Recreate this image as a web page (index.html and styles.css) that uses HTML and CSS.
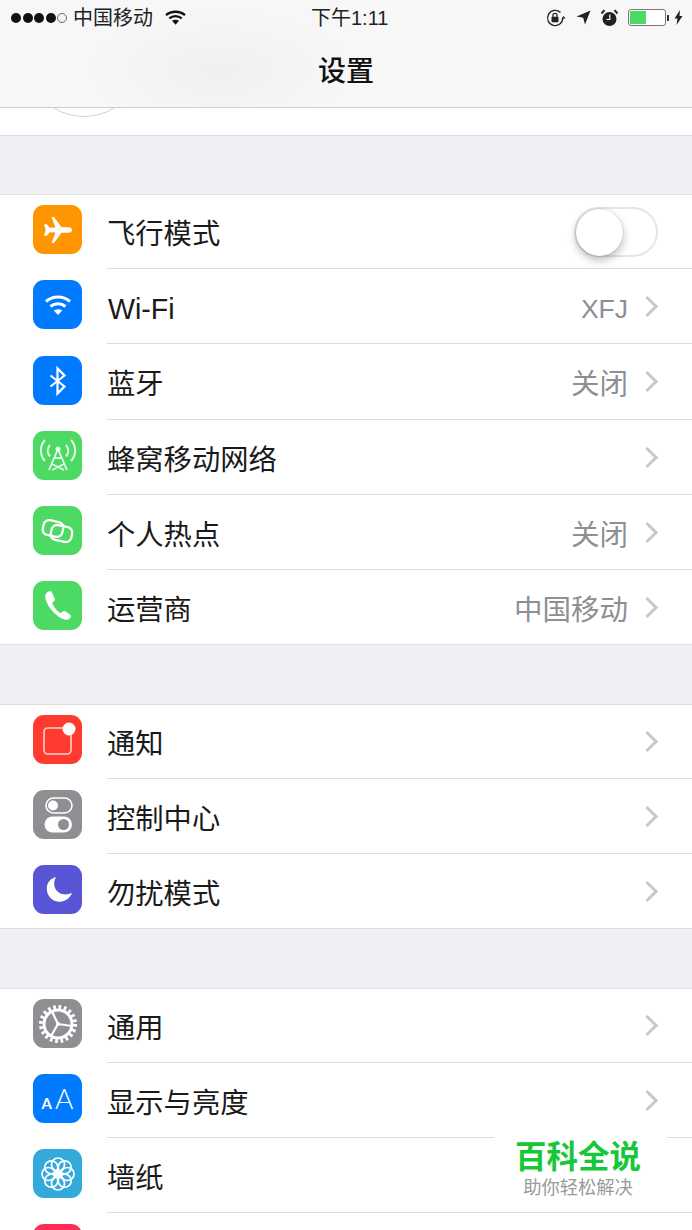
FILE: index.html
```html
<!DOCTYPE html>
<html lang="zh-CN">
<head>
<meta charset="utf-8">
<title>设置</title>
<link rel="stylesheet" href="styles.css">
</head>
<body>
<div class="screen">
  <header class="nav">
    <div class="status">
      <div class="status-left">
        <span class="dots"><i></i><i></i><i></i><i></i><i class="empty"></i></span>
        <span class="carrier">中国移动</span>
        <svg class="s-wifi" width="21" height="15" viewBox="0 0 21 15"><path d="M1 5.200C6.300.6 14.700.6 20 5.200M4.300 8.400c3.500-3 8.900-3 12.400 0" fill="none" stroke="#111" stroke-width="2.300"/><path d="M7 10.800c2-1.400 5-1.400 7 0l-3.500 3.900z" fill="#111"/></svg>
      </div>
      <div class="time">下午1:11</div>
      <div class="status-right">
        <svg width="20" height="18" viewBox="0 0 20 18"><path d="M16.800 9A7.600 7.600 0 1 1 14.500 3.500" fill="none" stroke="#222" stroke-width="1.300"/><path d="M15.500 9.500h4l-2-2.500z" fill="#222"/><rect x="5.500" y="7.700" width="7" height="5.600" rx=".8" fill="#222"/><path d="M7 8V6.300a2 2 0 0 1 4 0V8" fill="none" stroke="#222" stroke-width="1.300"/></svg>
        <svg class="s-arrow" width="15" height="15" viewBox="0 0 15 15"><path d="M14.500.5 9 14.500 7.200 7.800.5 6.500z" fill="#222"/></svg>
        <svg class="s-alarm" width="17" height="18" viewBox="0 0 17 18"><circle cx="8.500" cy="10" r="7" fill="#222"/><path d="M8.800 5.500v5H5.500" fill="none" stroke="#fff" stroke-width="1.200"/><path d="M.5 4.500 3.500 1.200M16.500 4.500l-3-3.300" stroke="#222" stroke-width="2"/></svg>
        <div class="battery"><div class="battery-body"><div class="battery-fill"></div></div><div class="battery-tip"></div></div>
        <svg class="s-bolt" width="9" height="15" viewBox="0 0 9 15"><path d="M6 0 .5 8.500h3L2.500 15 8.500 6h-3z" fill="#222"/></svg>
      </div>
    </div>
    <h1 class="title">设置</h1>
  </header>

  <div class="profile-tail"><div class="avatar"></div></div>
  <div class="gap first-gap"></div>

  <section class="group">
    <div class="row first">
      <span class="icon orange"><svg width="36" height="36" viewBox="0 0 36 36"><path d="M4 12.500 6.500 12l3.300 3.800 5.700-.2L11.500 5h2.500l7.500 10.300 7-.1c2 0 3.500 1.100 3.500 2.800s-1.500 2.800-3.500 2.800l-7-.1L14 31h-2.500l4-10.600-5.700-.2-3.300 3.800-2.500-.5 1.700-5.500z" fill="#fff"/></svg></span>
      <div class="row-main"><span class="label">飞行模式</span><div class="toggle"><div class="knob"></div></div></div>
    </div>
    <div class="row">
      <span class="icon blue"><svg width="36" height="36" viewBox="0 0 36 36"><path d="M6 14.500c7-6 17-6 24 0M10.500 19.500c4.500-3.800 10.500-3.800 15 0" fill="none" stroke="#fff" stroke-width="3"/><path d="M13.800 23.500c2.500-1.800 5.900-1.800 8.400 0L18 28z" fill="#fff"/></svg></span>
      <div class="row-main"><span class="label latin-label">Wi-Fi</span><span class="value latin">XFJ</span><span class="chev"></span></div>
    </div>
    <div class="row tall">
      <span class="icon blue"><svg width="36" height="36" viewBox="0 0 36 36"><path d="M10.500 12.500 24.500 23.500 17.500 30.500V5.500L24.500 12.500 10.500 23.500" fill="none" stroke="#fff" stroke-width="2.200"/></svg></span>
      <div class="row-main"><span class="label">蓝牙</span><span class="value">关闭</span><span class="chev"></span></div>
    </div>
    <div class="row">
      <span class="icon green"><svg width="48" height="48" viewBox="0 0 48 48"><g fill="none" stroke="#e6f8e6"><path d="M11 8c-5.500 6-5.500 15 0 21M37 8c5.500 6 5.500 15 0 21M16 13c-3 3.500-3 8 0 11.500M32 13c3 3.500 3 8 0 11.500" stroke-width="2"/><path d="M24 17 15 38M24 17l9 21M20 26h8M18 32l12 6M30 32 18 38" stroke-width="1.800"/></g><circle cx="24" cy="17" r="2.500" fill="#e6f8e6"/></svg></span>
      <div class="row-main"><span class="label">蜂窝移动网络</span><span class="chev"></span></div>
    </div>
    <div class="row">
      <span class="icon green"><svg width="48" height="48" viewBox="0 0 48 48"><g fill="none" stroke="#fff" stroke-width="2.300"><rect x="9" y="14" width="20" height="15" rx="5.500" transform="rotate(12 19 21.500)"/><rect x="17" y="19" width="21" height="15" rx="5.500" transform="rotate(12 27.500 26.500)"/></g></svg></span>
      <div class="row-main"><span class="label">个人热点</span><span class="value">关闭</span><span class="chev"></span></div>
    </div>
    <div class="row last">
      <span class="icon green"><svg width="36" height="36" viewBox="0 0 36 36"><path d="M8.500 3.500c-2 .8-3.800 3-3.300 6 1.200 7.500 9.500 18.800 19 22 2.500.8 5 0 6.300-2 .6-1 .5-2-.3-2.700l-5-3.500c-1-.6-2-.5-2.800.3l-1.500 1.700c-3.500-1.500-7-6-8.800-10.500l2-1.500c.8-.7 1-1.500.7-2.500l-3-6.500c-.5-1-2-1.200-3.300-.8z" fill="#fff"/></svg></span>
      <div class="row-main"><span class="label">运营商</span><span class="value">中国移动</span><span class="chev"></span></div>
    </div>
  </section>

  <div class="gap"></div>

  <section class="group">
    <div class="row first">
      <span class="icon red"><svg width="48" height="48" viewBox="0 0 48 48"><path d="M29 12H14a4 4 0 0 0-4 4v18a4 4 0 0 0 4 4h19a4 4 0 0 0 4-4V19" fill="none" stroke="#ffd0cc" stroke-width="1.600"/><circle cx="35" cy="13" r="6.500" fill="#fff"/></svg></span>
      <div class="row-main"><span class="label">通知</span><span class="chev"></span></div>
    </div>
    <div class="row">
      <span class="icon gray"><svg width="48" height="48" viewBox="0 0 48 48"><rect x="12" y="7" width="26" height="15" rx="7.500" fill="none" stroke="#fff" stroke-width="1.600"/><circle cx="19" cy="14.500" r="5" fill="#fff"/><rect x="10.500" y="25.500" width="27.500" height="16" rx="8" fill="#fff"/><circle cx="29.500" cy="33.500" r="5.500" fill="#8e8e93"/></svg></span>
      <div class="row-main"><span class="label">控制中心</span><span class="chev"></span></div>
    </div>
    <div class="row last">
      <span class="icon indigo"><svg width="48" height="48" viewBox="0 0 48 48"><path d="M22 11C15 13 12 18 13 25c1 7 8 12 15 10.500 4-.8 8-3.500 10-8.500-7 3-14.500 1-17-5-1.500-3.500-1-7.500 1-11z" fill="#fff"/></svg></span>
      <div class="row-main"><span class="label">勿扰模式</span><span class="chev"></span></div>
    </div>
  </section>

  <div class="gap"></div>

  <section class="group">
    <div class="row first">
      <span class="icon gray"><svg width="48" height="48" viewBox="0 0 48 48"><circle cx="24" cy="24" r="14" fill="none" stroke="#fff" stroke-width="3"/><circle cx="24" cy="24" r="17" fill="none" stroke="#fff" stroke-width="4" stroke-dasharray="2.700 2.640"/><path d="M24 24 18 11.500M24 24l14 2M24 24l-7 12" stroke="#fff" stroke-width="2.200"/><circle cx="24" cy="24" r="2" fill="#fff"/></svg></span>
      <div class="row-main"><span class="label">通用</span><span class="chev"></span></div>
    </div>
    <div class="row">
      <span class="icon blue aa"><span class="small-a">A</span><span class="big-a">A</span></span>
      <div class="row-main"><span class="label">显示与亮度</span><span class="chev"></span></div>
    </div>
    <div class="row">
      <span class="icon teal"><svg width="48" height="48" viewBox="0 0 48 48"><g fill="none" stroke="#fff" stroke-width="1.700"><circle cx="24" cy="14.500" r="6.500"/><circle cx="30.700" cy="17.300" r="6.500"/><circle cx="33.500" cy="24" r="6.500"/><circle cx="30.700" cy="30.700" r="6.500"/><circle cx="24" cy="33.500" r="6.500"/><circle cx="17.300" cy="30.700" r="6.500"/><circle cx="14.500" cy="24" r="6.500"/><circle cx="17.300" cy="17.300" r="6.500"/></g><circle cx="24" cy="24" r="2.500" fill="#fff"/></svg></span>
      <div class="row-main"><span class="label">墙纸</span><span class="chev"></span></div>
    </div>
    <div class="row">
      <span class="icon pink"></span>
      <div class="row-main"></div>
    </div>
  </section>

  <div class="watermark">
    <div class="wm-title">百科全说</div>
    <div class="wm-sub">助你轻松解决</div>
  </div>
</div>
</body>
</html>
```

FILE: styles.css
```css
* { box-sizing: border-box; }
html, body { margin: 0; padding: 0; }
body {
  width: 692px;
  height: 1230px;
  overflow: hidden;
  background: #efeff4;
  font-family: "Liberation Sans", "Noto Sans CJK SC", sans-serif;
  color: #1a1a1a;
}
.screen { position: relative; width: 692px; height: 1230px; overflow: hidden; }

.nav {
  height: 108px;
  background: radial-gradient(ellipse 130px 60px at 220px 70px, #f0f0f1, rgba(240, 240, 241, 0)), #f7f7f8;
  border-bottom: 1px solid #cfcfd1;
}
.status {
  height: 35px;
  padding: 0 9px 0 11px;
  display: flex;
  align-items: center;
  justify-content: space-between;
  position: relative;
}
.status-left { display: flex; align-items: center; }
.dots { display: flex; gap: 1.500px; margin-right: 6px; }
.dots i { width: 10px; height: 10px; border-radius: 50%; background: #111; }
.dots i.empty { background: transparent; border: 1px solid #666; }
.carrier { font-size: 20px; line-height: 24px; color: #222; }
.s-wifi { margin-left: 12px; }
.time {
  position: absolute;
  left: 311px;
  font-size: 20px;
  line-height: 24px;
  color: #222;
}
.status-right { display: flex; align-items: center; }
.s-arrow { margin-left: 10px; }
.s-alarm { margin-left: 10px; }
.battery { display: flex; align-items: center; margin-left: 10px; }
.battery-body {
  width: 38px;
  height: 17px;
  padding: 1px;
  border: 1px solid #777;
  border-radius: 3px;
  background: #fff;
}
.battery-fill { width: 16px; height: 100%; background: #4cd964; }
.battery-tip { width: 2px; height: 6px; margin-left: 1px; background: #333; }
.s-bolt { margin-left: 5px; }
.title {
  margin: 0;
  height: 72px;
  text-align: center;
  font-size: 28px;
  line-height: 73px;
  font-weight: 500;
  color: #111;
}

.profile-tail {
  height: 28px;
  background: #fff;
  border-bottom: 1px solid #dedee0;
  overflow: hidden;
}
.avatar {
  width: 120px;
  height: 120px;
  margin: -111px 0 0 24px;
  border: 1px solid #d0d0d2;
  border-radius: 50%;
}
.gap { height: 59px; background: #efeff4; }
.first-gap { height: 58px; }

.group { background: #fff; border-top: 1px solid #dedee0; border-bottom: 1px solid #dedee0; }
.group:last-of-type { border-bottom: 0; }
.row { height: 75px; display: flex; align-items: flex-start; }
.row.first, .row.last { height: 74px; }
.row.tall { height: 76px; }
.icon {
  flex: none;
  width: 49px;
  height: 49px;
  margin: 11px 0 0 33px;
  border-radius: 11px;
  display: flex;
  align-items: center;
  justify-content: center;
}
.row.first .icon { margin-top: 10px; }
.row.tall .icon { margin-top: 12px; }
.orange { background: #ff9500; }
.blue { background: #007aff; }
.green { background: #4cd964; }
.red { background: #ff3b30; }
.gray { background: #8e8e93; }
.indigo { background: #5856d6; }
.teal { background: #34aadc; }
.pink { background: #ff2d55; }
.aa {
  color: #fff;
  align-items: baseline;
  gap: 3px;
  padding-top: 9px;
  font-family: Lato, "Liberation Sans", sans-serif;
}
.small-a { font-size: 15px; line-height: 30px; font-weight: 700; }
.big-a { font-size: 28px; line-height: 30px; font-weight: 300; }

.row-main {
  flex: 1;
  height: 100%;
  margin-left: 25px;
  padding-right: 34px;
  display: flex;
  align-items: center;
  border-bottom: 1px solid #dcdcde;
}
.row.last .row-main { border-bottom: 0; }
.label { flex: 1; margin-top: 5px; font-size: 28.300px; line-height: 36px; color: #1a1a1a; }
.latin-label { padding-left: 1px; font-size: 28.600px; }
.value { margin: 5px 12px 0 0; font-size: 28.500px; line-height: 36px; color: #8e8e93; }
.value.latin { font-size: 26.500px; }
.chev {
  flex: none;
  width: 15px;
  height: 15px;
  margin-right: 3px;
  border-top: 3px solid #c7c7cc;
  border-right: 3px solid #c7c7cc;
  transform: rotate(45deg);
}
.toggle {
  width: 84px;
  height: 50px;
  border: 2px solid #e5e5e7;
  border-radius: 25px;
  background: #fff;
}
.knob {
  width: 47px;
  height: 47px;
  border-radius: 50%;
  background: #fff;
  box-shadow: 0 4px 8px rgba(0, 0, 0, .28), 0 0 1px rgba(0, 0, 0, .3);
}

.watermark {
  position: absolute;
  left: 494px;
  top: 1137px;
  width: 173px;
  height: 75px;
  padding-right: 5px;
  background: #fff;
  text-align: center;
}
.wm-title {
  margin-top: 1px;
  font-size: 31.500px;
  line-height: 38px;
  font-weight: 700;
  color: #16c837;
}
.wm-sub { font-size: 18.300px; line-height: 24px; color: #999; }
```
